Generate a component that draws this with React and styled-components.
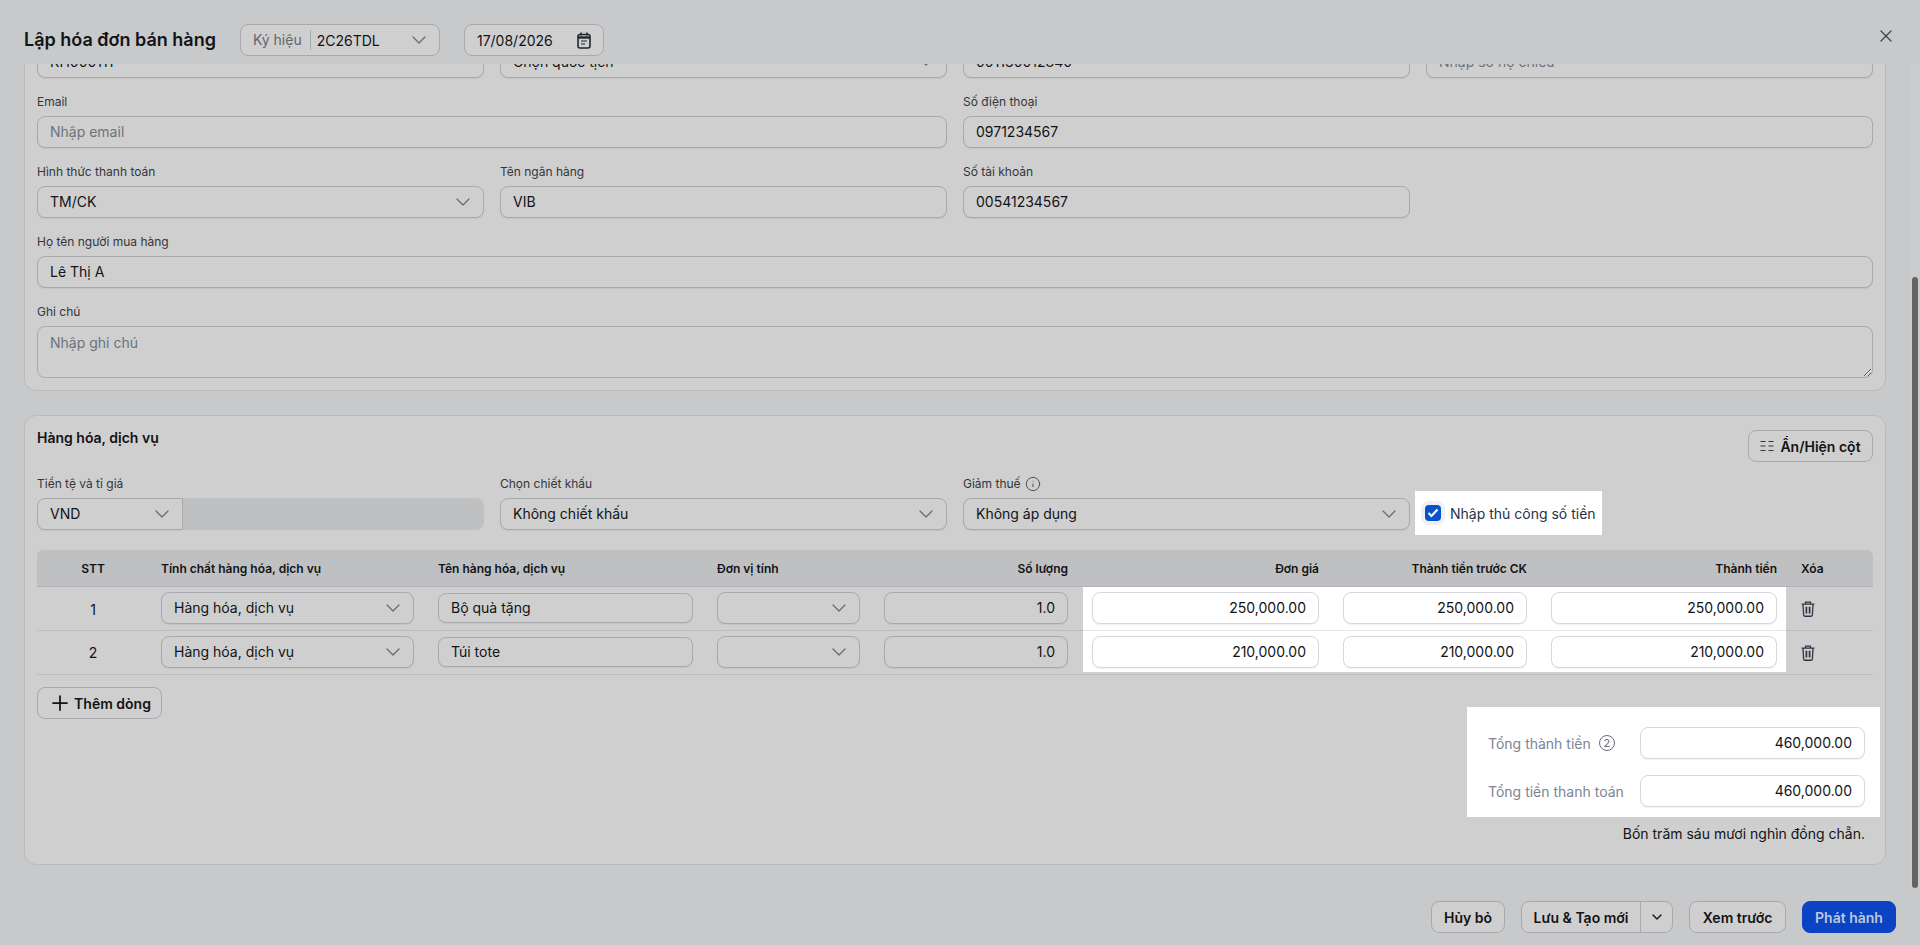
import { useLayoutEffect, useRef } from 'react';
import styled, { createGlobalStyle } from 'styled-components';
import { ChevronDown, Info, Plus, X } from 'lucide-react';

const INK = '#121316';
const MUTED = '#62666e';
const BORDER = '#a7a9ad';
const PAGE_BG = '#c8c9cb';
const CARD_BG = '#cfcfcf';
const GREY_BG = '#bfc0c2';
const SPOT_BORDER = '#d6d8de';

const TABLE_COLUMNS = '112px 277px 279px 167px 208px 251px 208px 250px 84px';

const GlobalStyle = createGlobalStyle`
  html, body {
    margin: 0;
    height: 100%;
    overflow: hidden;
    background: ${PAGE_BG};
    font-family: Inter, "Noto Sans", sans-serif;
    color: ${INK};
  }
  * { box-sizing: border-box; }
`;

const Page = styled.div`
  display: flex;
  flex-direction: column;
  height: 100vh;
  background: ${PAGE_BG};
`;

const Header = styled.header`
  display: flex;
  align-items: center;
  flex: 0 0 64px;
  padding: 16px 24px 0 24px;
`;

const Title = styled.h1`
  margin: 0 24px 0 0;
  font-size: 18px;
  font-weight: 600;
  line-height: 24px;
`;

const SymbolSelect = styled.div`
  display: flex;
  align-items: center;
  width: 200px;
  height: 32px;
  padding: 0 8px 0 12px;
  border: 1px solid ${BORDER};
  border-radius: 8px;
  background: ${CARD_BG};
  font-size: 14px;
  margin-right: 24px;
`;

const SymbolLabel = styled.span`
  color: ${MUTED};
  padding-right: 8px;
  margin-right: 6px;
  line-height: 20px;
  border-right: 1px solid ${BORDER};
`;

const SymbolValue = styled.span`
  flex: 1;
`;

const DateBox = styled.div`
  display: flex;
  align-items: center;
  justify-content: space-between;
  width: 140px;
  height: 32px;
  padding: 0 12px;
  border: 1px solid ${BORDER};
  border-radius: 8px;
  background: ${CARD_BG};
  font-size: 14px;
`;

const CloseButton = styled.button`
  display: flex;
  margin-left: auto;
  margin-bottom: 8px;
  padding: 0;
  border: 0;
  background: none;
  color: #3b4250;
`;

const BodyWrap = styled.div`
  position: relative;
  flex: 1;
  min-height: 0;
  display: flex;
`;

const ScrollBody = styled.main`
  flex: 1;
  min-width: 0;
  overflow: hidden;
  padding: 0 34px 23px 24px;
`;

const ScrollTrack = styled.div`
  position: absolute;
  top: 0;
  right: 0;
  bottom: 0;
  width: 10px;
  padding: 213px 2px 0;
  border-radius: 6px 6px 0 0;
  background: #cbcccd;
`;

const ScrollThumb = styled.div`
  height: 611px;
  border-radius: 3px;
  background: #646464;
`;

const Card = styled.section`
  border: 1px solid #b9babd;
  border-radius: 12px;
  background: ${CARD_BG};
  padding: 12px;
  & + & { margin-top: 24px; }
`;

/* phần đầu của form, đã cuộn khuất phía trên */
const ScrolledOff = styled.div`
  height: 234px;
`;

const FormGrid = styled.div`
  display: grid;
  grid-template-columns: repeat(4, 447px);
  gap: 16px;
`;

const Field = styled.div`
  min-width: 0;
  grid-column: span ${(p) => p.$span || 1};
`;

const Label = styled.label`
  display: flex;
  align-items: center;
  gap: 4px;
  height: 18px;
  margin-bottom: 4px;
  padding-bottom: 2px;
  font-size: 12px;
  line-height: 16px;
  color: #33363c;
`;

const TextInput = styled.input`
  display: block;
  width: ${(p) => p.$w || '100%'};
  height: ${(p) => p.$h || 32}px;
  margin-top: ${(p) => p.$mt || 0}px;
  padding: 0 12px 1px;
  border: 1px solid ${(p) => (p.$spot ? SPOT_BORDER : BORDER)};
  border-radius: 8px;
  background: ${(p) => (p.$spot ? '#fff' : CARD_BG)};
  box-shadow: 0 1px 1px rgba(0, 0, 0, 0.06);
  font: 14px Inter, sans-serif;
  color: ${INK};
  text-align: ${(p) => (p.$right ? 'right' : 'left')};
  outline: none;

  &::placeholder { color: #6c727c; opacity: 1; }
`;

const NoteInput = styled.textarea`
  display: block;
  width: 100%;
  height: 52px;
  padding: 6px 12px;
  border: 1px solid ${BORDER};
  border-radius: 8px;
  background: ${CARD_BG};
  font: 14px/20px Inter, sans-serif;
  outline: none;

  &::placeholder { color: #6c727c; opacity: 1; }
`;

const SelectShell = styled.div`
  display: flex;
  align-items: center;
  justify-content: space-between;
  width: ${(p) => p.$w || '100%'};
  flex: ${(p) => (p.$w ? '0 0 auto' : 'initial')};
  height: 32px;
  padding: 0 8px 1px 12px;
  border: 1px solid ${BORDER};
  border-radius: ${(p) => (p.$joined ? '8px 0 0 8px' : '8px')};
  background: ${CARD_BG};
  box-shadow: 0 1px 1px rgba(0, 0, 0, 0.06);
  font-size: 14px;
`;

const Chevron = styled(ChevronDown).attrs({ size: 24, strokeWidth: 1.25 })`
  flex: none;
  color: #666b75;
`;

const Select = ({ value, w, joined }) => (
  <SelectShell $w={w} $joined={joined}>
    <span>{value}</span>
    <Chevron />
  </SelectShell>
);

const CurrencyRow = styled.div`
  display: flex;
`;

const RateBox = styled.div`
  flex: 1;
  height: 32px;
  border-radius: 0 8px 8px 0;
  background: ${GREY_BG};
`;

const SectionHead = styled.div`
  display: flex;
  justify-content: space-between;
  align-items: flex-start;
  margin-bottom: 14px;
`;

const SectionTitle = styled.h2`
  margin: 0;
  font-size: 14px;
  font-weight: 600;
  line-height: 20px;
`;

const Button = styled.button`
  display: inline-flex;
  align-items: center;
  justify-content: center;
  gap: ${(p) => p.$gap || 6}px;
  width: ${(p) => p.$w || 'auto'};
  height: 32px;
  padding: 0 12px;
  border: 1px solid ${BORDER};
  border-radius: 8px;
  background: ${CARD_BG};
  font: 600 14px Inter, sans-serif;
  color: ${INK};
  white-space: nowrap;
`;

const ColumnsButton = styled(Button)`
  margin-top: 2px;
  svg { flex: none; }
`;

const AddButton = styled(Button)`
  padding: 0 8px;
`;

const PrimaryButton = styled(Button)`
  border-color: #0a43c4;
  background: #0a43c4;
  color: #bcc7dc;
`;

const SplitButton = styled.div`
  display: flex;
  width: 152px;
  height: 32px;
  border: 1px solid ${BORDER};
  border-radius: 8px;
  background: ${CARD_BG};
  font: 600 14px Inter, sans-serif;
`;

const SplitMain = styled.span`
  display: flex;
  align-items: center;
  justify-content: center;
  flex: 1;
  white-space: nowrap;
  border-right: 1px solid ${BORDER};
`;

const SplitArrow = styled.span`
  display: flex;
  align-items: center;
  justify-content: center;
  width: 31px;
`;

const ManualCheck = styled.label`
  display: inline-flex;
  align-items: center;
  justify-self: start;
  align-self: end;
  gap: 9px;
  height: 44px;
  margin: 0 0 -5px -11px;
  padding: 0 6px 0 10px;
  background: #fff;
  font-size: 14px;
  color: #27324a;
`;

const CheckBox = styled.span`
  display: flex;
  align-items: center;
  justify-content: center;
  width: 16px;
  height: 16px;
  border-radius: 4px;
  background: #0a52c9;
  box-shadow: 0 0 0 4px #edf0f5;
`;

const TableWrap = styled.div`
  margin-top: 20px;
`;

const HeadRow = styled.div`
  display: grid;
  grid-template-columns: ${TABLE_COLUMNS};
  height: 37px;
  border-bottom: 1px solid #b1b2b5;
  border-radius: 6px 6px 0 0;
  background: ${GREY_BG};
`;

const HeadCell = styled.div`
  display: flex;
  align-items: center;
  justify-content: ${(p) => p.$justify || 'flex-start'};
  padding: 0 12px;
  font-size: 12px;
  font-weight: 600;
`;

const Row = styled.div`
  display: grid;
  grid-template-columns: ${TABLE_COLUMNS};
  height: 44px;
  border-bottom: 1px solid #bcbdc0;
`;

const Cell = styled.div`
  display: flex;
  align-items: ${(p) => (p.$top ? 'flex-start' : 'center')};
  justify-content: ${(p) => p.$justify || 'flex-start'};
  padding: ${(p) => (p.$top ? '5px 12px 0' : '0 12px')};
  font-size: 14px;
`;

const SpotCell = styled(Cell)`
  background: #fff;
  margin: ${(p) => (p.$last ? '0 0 2px' : '0')};
  border-bottom: ${(p) => (p.$last ? '0' : '1px solid #e4e5e8')};
  height: ${(p) => (p.$last ? '41px' : '44px')};
  ${(p) => p.$first && 'margin-left: 3px; padding-left: 9px;'}
  ${(p) => p.$end && 'margin-right: 3px; padding-right: 9px;'}
`;

const BottomRow = styled.div`
  display: flex;
  justify-content: space-between;
  align-items: flex-start;
  margin-top: 12px;
`;

const Totals = styled.div`
  display: grid;
  grid-template-columns: 152px 225px;
  align-items: center;
  row-gap: 16px;
  width: 413px;
  margin: 20px -7px 0 0;
  padding: 20px 15px 10px 21px;
  background: #fff;
`;

const TotalLabel = styled.span`
  display: flex;
  align-items: center;
  gap: 8px;
  font-size: 14px;
  color: #7b8594;
`;

const CountBadge = styled.span`
  display: flex;
  align-items: center;
  justify-content: center;
  width: 16px;
  height: 16px;
  border: 1px solid #667080;
  border-radius: 50%;
  font-size: 11px;
  line-height: 1;
  color: #667080;
`;

const AmountWords = styled.p`
  margin: 7px 8px 8px 0;
  font-size: 14px;
  line-height: 20px;
  text-align: right;
`;

const Footer = styled.footer`
  display: flex;
  justify-content: flex-end;
  gap: 16px;
  flex: 0 0 57px;
  padding: 13px 24px 0 0;
`;

const ColumnsIcon = () => (
  <svg width="14" height="12" viewBox="0 0 14 12" fill="none" stroke="#33363c" strokeWidth="1">
    <path d="M0.5 1.5h5M8.5 1.5h5M0.5 6h5M8.5 6h5M0.5 10.5h5M8.5 10.5h5" />
  </svg>
);

const CalendarIcon = () => (
  <svg width="14" height="17" viewBox="0 0 14 17" fill="none" stroke="#23272e">
    <rect x="1" y="2.5" width="12" height="13.5" rx="2" strokeWidth="1.6" />
    <path d="M1 5.5h12" strokeWidth="2.4" />
    <path d="M4 0.5v3M10 0.5v3" strokeWidth="1.6" />
    <path d="M4 9h6M4 12h4" strokeWidth="1.2" />
  </svg>
);

const TrashIcon = () => (
  <svg width="14" height="16" viewBox="0 0 13 15" fill="none" stroke="#2c3646" strokeWidth="1.2">
    <path d="M0.5 3h12M4.2 3V1h4.6v2" />
    <path d="M1.8 3l0.6 10.2c0 0.6 0.4 1.1 1 1.1h6.2c0.6 0 1-0.5 1-1.1L11.2 3" />
    <path d="M5 5.5v6.2M8 5.5v6.2" strokeWidth="1.6" />
  </svg>
);

const CheckMark = () => (
  <svg width="12" height="10" viewBox="0 0 12 10" fill="none" stroke="#fff" strokeWidth="2">
    <path d="M1.5 5l3 3 6-6.5" />
  </svg>
);

const lines = [
  { no: 1, name: 'Bộ quà tặng', price: '250,000.00' },
  { no: 2, name: 'Túi tote', price: '210,000.00' },
];

export default function App() {
  const bodyRef = useRef(null);

  // màn hình đang ở cuối form
  useLayoutEffect(() => {
    bodyRef.current.scrollTop = bodyRef.current.scrollHeight;
  }, []);

  return (
    <Page>
      <GlobalStyle />
      <Header>
        <Title>Lập hóa đơn bán hàng</Title>
        <SymbolSelect>
          <SymbolLabel>Ký hiệu</SymbolLabel>
          <SymbolValue>2C26TDL</SymbolValue>
          <Chevron />
        </SymbolSelect>
        <DateBox>
          <span>17/08/2026</span>
          <CalendarIcon />
        </DateBox>
        <CloseButton aria-label="Đóng">
          <X size={20} strokeWidth={1.5} />
        </CloseButton>
      </Header>

      <BodyWrap>
        <ScrollBody ref={bodyRef}>
          <Card>
            <ScrolledOff />
            <FormGrid>
              <Field>
                <Label />
                <TextInput defaultValue="KH000111" />
              </Field>
              <Field>
                <Label />
                <Select value="Chọn quốc tịch" />
              </Field>
              <Field>
                <Label />
                <TextInput defaultValue="001130012840" />
              </Field>
              <Field>
                <Label />
                <TextInput placeholder="Nhập số hộ chiếu" />
              </Field>

              <Field $span={2}>
                <Label>Email</Label>
                <TextInput placeholder="Nhập email" />
              </Field>
              <Field $span={2}>
                <Label>Số điện thoại</Label>
                <TextInput defaultValue="0971234567" />
              </Field>

              <Field>
                <Label>Hình thức thanh toán</Label>
                <Select value="TM/CK" />
              </Field>
              <Field>
                <Label>Tên ngân hàng</Label>
                <TextInput defaultValue="VIB" />
              </Field>
              <Field $span={2}>
                <Label>Số tài khoản</Label>
                <TextInput $w="447px" defaultValue="00541234567" />
              </Field>

              <Field $span={4}>
                <Label>Họ tên người mua hàng</Label>
                <TextInput defaultValue="Lê Thị A" />
              </Field>
              <Field $span={4}>
                <Label>Ghi chú</Label>
                <NoteInput placeholder="Nhập ghi chú" />
              </Field>
            </FormGrid>
          </Card>

          <Card>
            <SectionHead>
              <SectionTitle>Hàng hóa, dịch vụ</SectionTitle>
              <ColumnsButton $gap={6} $w="125px">
                <ColumnsIcon />
                Ẩn/Hiện cột
              </ColumnsButton>
            </SectionHead>

            <FormGrid>
              <Field>
                <Label>Tiền tệ và tỉ giá</Label>
                <CurrencyRow>
                  <Select value="VND" w="146px" joined />
                  <RateBox />
                </CurrencyRow>
              </Field>
              <Field>
                <Label>Chọn chiết khấu</Label>
                <Select value="Không chiết khấu" />
              </Field>
              <Field>
                <Label>
                  Giảm thuế
                  <Info size={16} strokeWidth={1.5} color="#4b505a" />
                </Label>
                <Select value="Không áp dụng" />
              </Field>
              <ManualCheck>
                <CheckBox>
                  <CheckMark />
                </CheckBox>
                Nhập thủ công số tiền
              </ManualCheck>
            </FormGrid>

            <TableWrap>
              <HeadRow>
                <HeadCell $justify="center">STT</HeadCell>
                <HeadCell>Tính chất hàng hóa, dịch vụ</HeadCell>
                <HeadCell>Tên hàng hóa, dịch vụ</HeadCell>
                <HeadCell>Đơn vị tính</HeadCell>
                <HeadCell $justify="flex-end">Số lượng</HeadCell>
                <HeadCell $justify="flex-end">Đơn giá</HeadCell>
                <HeadCell $justify="flex-end">Thành tiền trước CK</HeadCell>
                <HeadCell $justify="flex-end">Thành tiền</HeadCell>
                <HeadCell>Xóa</HeadCell>
              </HeadRow>

              {lines.map((line, i) => {
                const last = i === lines.length - 1;
                return (
                  <Row key={line.no}>
                    <Cell $justify="center">{line.no}</Cell>
                    <Cell $top>
                      <Select value="Hàng hóa, dịch vụ" />
                    </Cell>
                    <Cell $top>
                      <TextInput $h={30} $mt={1} defaultValue={line.name} />
                    </Cell>
                    <Cell $top>
                      <Select value="" />
                    </Cell>
                    <Cell $top>
                      <TextInput $right defaultValue="1.0" />
                    </Cell>
                    <SpotCell $top $first $last={last}>
                      <TextInput $spot $right defaultValue={line.price} />
                    </SpotCell>
                    <SpotCell $top $last={last}>
                      <TextInput $spot $right defaultValue={line.price} />
                    </SpotCell>
                    <SpotCell $top $end $last={last}>
                      <TextInput $spot $right defaultValue={line.price} />
                    </SpotCell>
                    <Cell>
                      <TrashIcon />
                    </Cell>
                  </Row>
                );
              })}
            </TableWrap>

            <BottomRow>
              <AddButton $gap={2} $w="125px">
                <Plus size={24} strokeWidth={1.75} />
                Thêm dòng
              </AddButton>
              <Totals>
                <TotalLabel>
                  Tổng thành tiền
                  <CountBadge>2</CountBadge>
                </TotalLabel>
                <TextInput $spot $right defaultValue="460,000.00" />
                <TotalLabel>Tổng tiền thanh toán</TotalLabel>
                <TextInput $spot $right defaultValue="460,000.00" />
              </Totals>
            </BottomRow>
            <AmountWords>Bốn trăm sáu mươi nghìn đồng chẵn.</AmountWords>
          </Card>
        </ScrollBody>
        <ScrollTrack>
          <ScrollThumb />
        </ScrollTrack>
      </BodyWrap>

      <Footer>
        <Button $w="74px">Hủy bỏ</Button>
        <SplitButton>
          <SplitMain>Lưu &amp; Tạo mới</SplitMain>
          <SplitArrow>
            <ChevronDown size={16} strokeWidth={2} />
          </SplitArrow>
        </SplitButton>
        <Button $w="97px">Xem trước</Button>
        <PrimaryButton $w="94px">Phát hành</PrimaryButton>
      </Footer>
    </Page>
  );
}
